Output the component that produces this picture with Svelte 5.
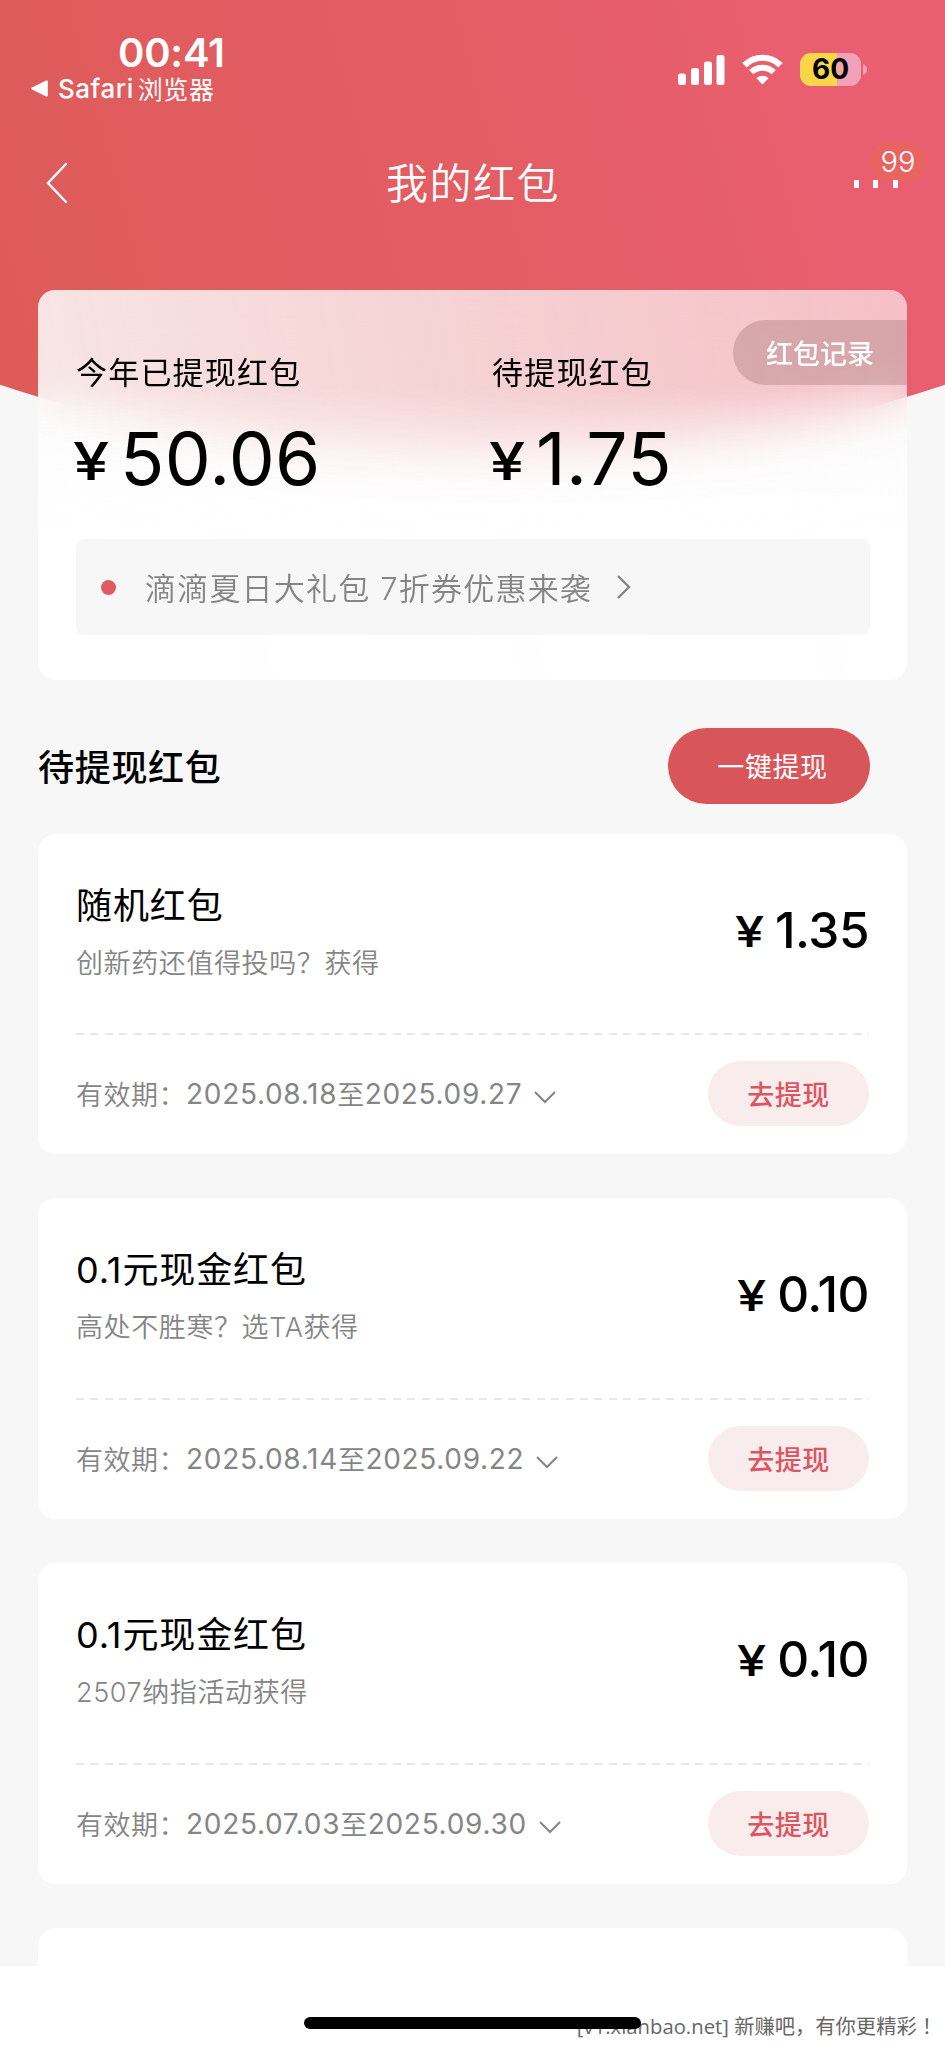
<script>
  const summary = [
    { label: '今年已提现红包', amount: '50.06' },
    { label: '待提现红包', amount: '1.75' }
  ];

  const packets = [
    { title: '随机红包', source: '创新药还值得投吗？获得', amount: '1.35', from: '2025.08.18', to: '2025.09.27' },
    { title: '0.1元现金红包', source: '高处不胜寒？选TA获得', amount: '0.10', from: '2025.08.14', to: '2025.09.22' },
    { title: '0.1元现金红包', source: '2507纳指活动获得', amount: '0.10', from: '2025.07.03', to: '2025.09.30' }
  ];
</script>

<div class="page">
  <header class="hero">
    <div class="status">
      <div class="status-left">
        <div class="time">00:41</div>
        <div class="back-app">
          <svg width="17" height="17" viewBox="0 0 17 17">
            <path d="M15.2.6 1 7.4q-1.6 1.1 0 2.2l14.2 6.8q1.6.4 1.6-1.2V1.8Q16.8.2 15.2.6z" fill="#fff" />
          </svg>
          <span class="app-name">Safari</span><span>浏览器</span>
        </div>
      </div>
      <div class="status-right">
        <svg width="47" height="30" viewBox="0 0 47 30" fill="#fff">
          <rect x="0" y="18.5" width="8" height="11.5" rx="2.5" />
          <rect x="13" y="13" width="8" height="17" rx="2.5" />
          <rect x="26" y="6.5" width="8" height="23.5" rx="2.5" />
          <rect x="38.5" y="0" width="8" height="30" rx="2.5" />
        </svg>
        <svg class="wifi" width="41" height="31" viewBox="0 0 41 31" fill="none" stroke="#fff">
          <path d="M2.5 11.2a25.5 25.5 0 0 1 36 0" stroke-width="6.2" />
          <path d="M9.3 18.2a16 16 0 0 1 22.4 0" stroke-width="6" />
          <path d="M14.4 24.3a8.8 8.8 0 0 1 12.2 0L20.5 30.5z" fill="#fff" stroke="none" />
        </svg>
        <div class="battery">60</div>
        <svg class="nub" width="4" height="11" viewBox="0 0 4 11">
          <path d="M0 0q4 1.8 4 5.5T0 11z" fill="#f3a0ae" />
        </svg>
      </div>
    </div>

    <nav class="nav">
      <svg class="back" width="24" height="42" viewBox="0 0 24 42">
        <path d="M21 2 3 21l18 19" fill="none" stroke="#fff" stroke-width="2.4" stroke-linecap="round" />
      </svg>
      <h1>我的红包</h1>
      <div class="more">
        <i></i><i></i><i></i>
        <span class="badge">99</span>
      </div>
    </nav>
  </header>

  <section class="wallet">
    <button class="record">红包记录</button>
    <div class="totals">
      {#each summary as item}
        <div class="total">
          <div class="total-label">{item.label}</div>
          <div class="total-amount"><span class="yen">¥</span><span>{item.amount}</span></div>
        </div>
      {/each}
    </div>
    <div class="notice">
      <span class="dot"></span>
      <span class="notice-text">滴滴夏日大礼包 7折券优惠来袭</span>
      <svg width="16" height="26" viewBox="0 0 16 26">
        <path d="M2 2l11 11L2 24" fill="none" stroke="#858585" stroke-width="2.4" />
      </svg>
    </div>
  </section>

  <div class="section-head">
    <h2>待提现红包</h2>
    <button class="withdraw-all">一键提现</button>
  </div>

  <main class="list">
    {#each packets as packet}
      <article class="packet">
        <div class="packet-top">
          <div>
            <h3>{packet.title}</h3>
            <p>{packet.source}</p>
          </div>
          <div class="packet-amount"><span class="yen">¥</span><span>{packet.amount}</span></div>
        </div>
        <div class="packet-bottom">
          <div class="validity">
            <span>有效期：</span><span class="date">{packet.from}</span><span>至</span><span class="date">{packet.to}</span>
            <svg width="24" height="14" viewBox="0 0 24 14">
              <path d="M2 2l10 10L22 2" fill="none" stroke="#858585" stroke-width="2" />
            </svg>
          </div>
          <button class="withdraw">去提现</button>
        </div>
      </article>
    {/each}
    <article class="packet"></article>
  </main>

  <footer class="bottom">
    <div class="watermark">[v1.xianbao.net] 新赚吧，有你更精彩<span class="mark">！</span></div>
    <div class="home-bar"></div>
  </footer>
</div>

<style>
  :global(body) {
    margin: 0;
    background: #f7f7f7;
  }

  .page {
    width: 945px;
    height: 2048px;
    overflow: hidden;
    display: flex;
    flex-direction: column;
    background: #f7f7f7;
    color: #000;
    font-family: Inter, 'Noto Sans CJK SC', sans-serif;
    font-size: 27px;
    white-space: nowrap;
  }

  h1, h2, h3, p {
    margin: 0;
    font-weight: 400;
  }

  button {
    border: 0;
    padding: 0 0 1px;
    font-family: inherit;
    white-space: nowrap;
  }

  svg {
    display: block;
    flex: none;
  }

  .hero {
    flex: none;
    box-sizing: border-box;
    height: 462px;
    margin-bottom: -172px;
    padding-top: 28px;
    color: #fff;
    background: linear-gradient(75deg, #dd5b59 0%, #e35d63 48%, #eb5f73 100%);
    clip-path: circle(1500px at 50% -1039px);
  }

  .status {
    display: flex;
    justify-content: space-between;
    height: 80px;
  }

  .status-left {
    padding-left: 31px;
  }

  .time {
    height: 47px;
    padding-left: 87px;
    font-size: 40px;
    font-weight: 600;
    line-height: 49px;
    letter-spacing: -0.2px;
  }

  .back-app {
    display: flex;
    align-items: center;
    height: 26px;
    font-size: 25px;
    letter-spacing: 0.6px;
  }

  .app-name {
    margin: 0 4px 0 10px;
    font-size: 26px;
    font-weight: 450;
    letter-spacing: 0.5px;
  }

  .status-right {
    box-sizing: border-box;
    display: flex;
    align-items: center;
    height: 86px;
    margin: -1px 78px 0 0;
    padding-bottom: 1px;
  }

  .wifi {
    margin-left: 17px;
  }

  .battery {
    width: 61px;
    height: 33px;
    margin-left: 17px;
    border-radius: 11px;
    background: linear-gradient(90deg, #f8d648 60%, #f2a2b6 60%);
    color: #000;
    font-size: 28px;
    font-weight: 700;
    line-height: 33px;
    text-align: center;
  }

  .nub {
    margin-left: 2px;
  }

  .nav {
    display: flex;
    align-items: center;
    justify-content: space-between;
    height: 150px;
    padding: 0 47px 0 45px;
  }

  .back {
    margin-right: 23px;
  }

  h1 {
    padding-bottom: 6px;
    font-size: 42px;
    font-weight: 350;
    letter-spacing: 1.5px;
  }

  .more {
    position: relative;
    display: flex;
    justify-content: space-between;
    width: 44px;
    margin-top: 2px;
  }

  .more i {
    width: 5px;
    height: 8px;
    background: #fff;
  }

  .badge {
    position: absolute;
    left: 15px;
    bottom: 7px;
    z-index: -1;
    width: 58px;
    height: 38px;
    border-radius: 19px;
    background: #e96461;
    font-size: 29px;
    font-weight: 350;
    line-height: 37px;
    text-align: center;
  }

  .wallet {
    position: relative;
    flex: none;
    box-sizing: border-box;
    height: 390px;
    margin: 0 38px;
    padding: 62px 38px 0;
    border-radius: 17px;
    overflow: hidden;
    background:
      linear-gradient(180deg, rgba(255, 255, 255, 0) 25%, rgba(255, 255, 255, 0.95) 62%),
      linear-gradient(80deg, rgba(252, 252, 252, 0.87), rgba(252, 252, 252, 0.73) 55%, rgba(252, 252, 252, 0.62));
    backdrop-filter: blur(26px);
  }

  .record {
    position: absolute;
    top: 30px;
    right: 0;
    width: 174px;
    height: 65px;
    border-radius: 33px 0 0 33px;
    background: rgba(145, 100, 98, 0.3);
    color: #fff;
    font-size: 27px;
    font-weight: 500;
  }

  .totals {
    display: flex;
  }

  .total {
    flex: none;
    width: 416px;
  }

  .total-label {
    height: 40px;
    font-size: 31px;
    line-height: 41px;
    letter-spacing: 1.2px;
  }

  .total-amount {
    display: flex;
    align-items: baseline;
    height: 147px;
    font-size: 73px;
    line-height: 134px;
    letter-spacing: 0.3px;
  }

  .total-amount .yen {
    width: 47px;
    margin-left: -3px;
    font-size: 52px;
    font-weight: 500;
    transform: translateY(-5px) scaleX(1.25);
    transform-origin: left;
  }

  .notice {
    display: flex;
    align-items: center;
    width: 794px;
    height: 96px;
    border-radius: 8px;
    background: #f7f7f7;
    color: #858585;
  }

  .dot {
    width: 15px;
    height: 15px;
    margin: 0 29px 0 25px;
    border-radius: 50%;
    background: #e05a63;
  }

  .notice-text {
    margin-right: 24px;
    padding-bottom: 2px;
    font-size: 31px;
    font-weight: 350;
    letter-spacing: 1.2px;
  }

  .section-head {
    flex: none;
    display: flex;
    align-items: center;
    justify-content: space-between;
    height: 76px;
    padding: 48px 75px 29.5px 38px;
  }

  h2 {
    padding-bottom: 2px;
    font-size: 36px;
    font-weight: 500;
    letter-spacing: 0.7px;
  }

  .withdraw-all {
    width: 202px;
    height: 76px;
    padding-left: 7px;
    border-radius: 38px;
    background: #d8555a;
    color: #fff;
    font-size: 27px;
    letter-spacing: 0.6px;
  }

  .list {
    flex: none;
    display: flex;
    flex-direction: column;
    gap: 44.4px;
    height: 1132px;
    overflow: hidden;
    padding: 0 38px;
  }

  .packet {
    flex: none;
    box-sizing: border-box;
    height: 320.5px;
    padding: 0 38px;
    border-radius: 18px;
    background: #fff;
  }

  .packet-top {
    box-sizing: border-box;
    display: flex;
    justify-content: space-between;
    height: 201.4px;
    padding-top: 43px;
    background: repeating-linear-gradient(90deg, #e8e8e8 0 8px, transparent 8px 14.4px) bottom / 100% 2px no-repeat;
  }

  h3 {
    height: 55px;
    font-size: 36px;
    line-height: 58px;
    letter-spacing: 0.9px;
  }

  .packet p {
    height: 60px;
    color: #858585;
    font-size: 27px;
    font-weight: 350;
    line-height: 64px;
    letter-spacing: 0.6px;
  }

  .packet-amount {
    display: flex;
    align-items: baseline;
    height: 108px;
    font-size: 49.5px;
    font-weight: 500;
    line-height: 107px;
    letter-spacing: -0.5px;
  }

  .packet-amount .yen {
    width: 40px;
    font-size: 43px;
    font-weight: 500;
    transform: translateY(-1px) scaleX(1.22);
    transform-origin: left;
  }

  .packet-bottom {
    display: flex;
    align-items: center;
    justify-content: space-between;
    height: 118px;
  }

  .validity {
    display: flex;
    align-items: center;
    padding-bottom: 1px;
    color: #858585;
    font-size: 27px;
    font-weight: 350;
    letter-spacing: 0.5px;
  }

  .date {
    padding-top: 1px;
    font-size: 28px;
    font-weight: 370;
    letter-spacing: 0.7px;
  }

  .validity svg {
    margin: 7px 0 0 11px;
  }

  .withdraw {
    width: 161px;
    height: 65px;
    border-radius: 33px;
    background: #f9eced;
    color: #dc5560;
    font-size: 27px;
    font-weight: 500;
    letter-spacing: 0.5px;
  }

  .bottom {
    position: relative;
    flex: 1;
    background: #fff;
  }

  .watermark {
    position: absolute;
    right: 8px;
    bottom: 7px;
    color: #666;
    font-family: 'Open Sans', 'Noto Sans CJK SC', sans-serif;
    font-size: 20.3px;
    line-height: 30px;
  }

  .mark {
    font-family: 'Noto Sans CJK TC', sans-serif;
  }

  .home-bar {
    position: absolute;
    left: 304px;
    bottom: 19px;
    width: 337px;
    height: 12px;
    border-radius: 6px;
    background: #000;
  }
</style>
